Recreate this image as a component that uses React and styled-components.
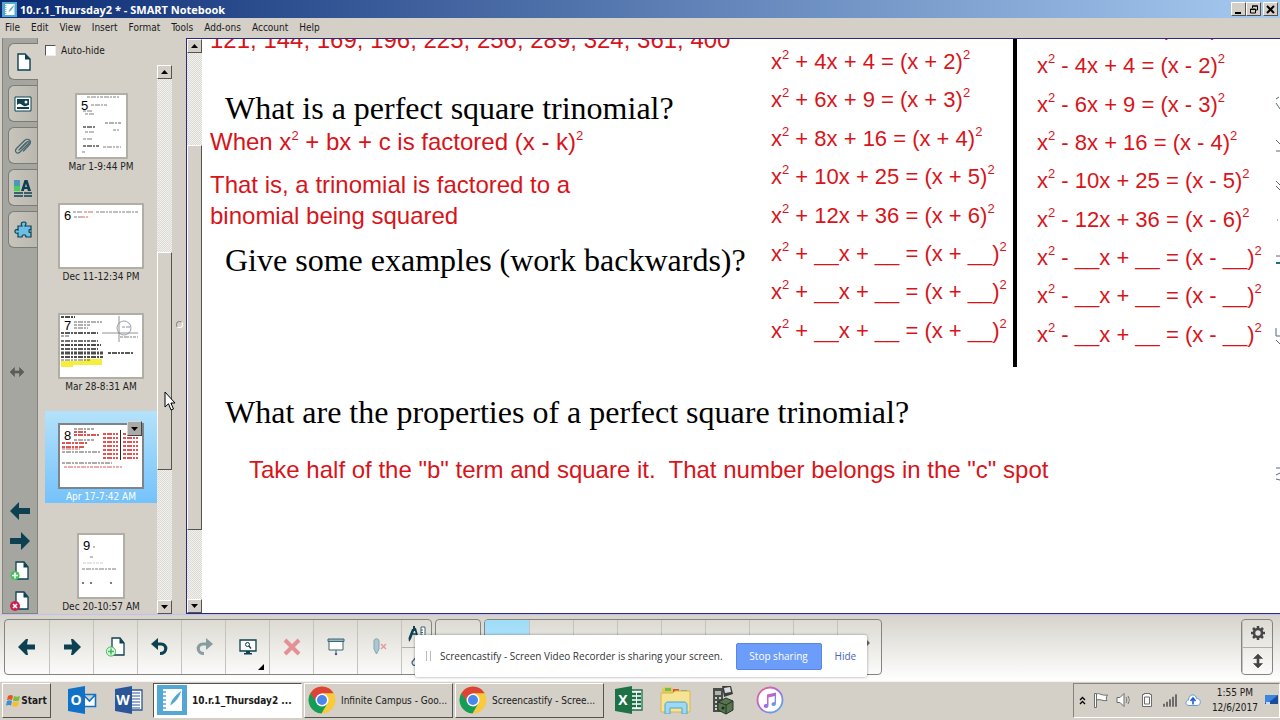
import React, { useState } from "react"
import styled, { createGlobalStyle, css } from "styled-components"

const UI_FONT = `"DejaVu Sans Condensed", "DejaVu Sans", sans-serif`

const GlobalStyle = createGlobalStyle`
  * {
    box-sizing: border-box;
  }
  body {
    margin: 0;
    overflow: hidden;
    font-family: ${UI_FONT};
    font-size: 10px;
    color: #1a1a1a;
  }
  button {
    padding: 0;
    border: 0;
    background: none;
    font: inherit;
    color: inherit;
  }
  svg {
    display: block;
    flex: none;
  }
`

const menus = ["File", "Edit", "View", "Insert", "Format", "Tools", "Add-ons", "Account", "Help"]

const plusRows = [
  "+ 4x + 4 = (x + 2)",
  "+ 6x + 9 = (x + 3)",
  "+ 8x + 16 = (x + 4)",
  "+ 10x + 25 = (x + 5)",
  "+ 12x + 36 = (x + 6)",
  "+ __x + __ = (x + __)",
  "+ __x + __ = (x + __)",
  "+ __x + __ = (x + __)",
]

const minusRows = [
  "- 2x + 1 = (x - 1)",
  "- 4x + 4 = (x - 2)",
  "- 6x + 9 = (x - 3)",
  "- 8x + 16 = (x - 4)",
  "- 10x + 25 = (x - 5)",
  "- 12x + 36 = (x - 6)",
  "- __x + __ = (x - __)",
  "- __x + __ = (x - __)",
  "- __x + __ = (x - __)",
]

/* ---------- icons ---------- */

const INK = "#0d4050"

const ArrowIcon = ({ flip, size = 20 }) => (
  <svg width={size} height={size} viewBox="0 0 20 20">
    <path
      d="M0 10 9 1v6h11v6H9v6z"
      fill={INK}
      transform={flip ? "rotate(180 10 10)" : undefined}
    />
  </svg>
)

const ToolArrowIcon = ({ flip }) => (
  <svg width="18" height="16" viewBox="0 0 18 16">
    <path
      d="M0 8 8 0h2L9 5.500h8v5H9l1 5.500H8z"
      fill={INK}
      transform={flip ? "rotate(180 9 8)" : undefined}
    />
  </svg>
)

const PageIcon = ({ badge, outline }) => (
  <svg width="20" height="20" viewBox="0 0 20 20">
    <path d="M6 1h8l4 5v12H6z" fill="#fff" stroke={INK} strokeWidth="1.3" />
    <path d="M13.500 1v5.500H18z" fill={INK} />
    {badge === "add" && (
      <>
        <circle cx="5" cy="14.500" r="4.600" fill={outline ? "#e4f5e2" : "#45c05c"} stroke={outline ? "#3fba5c" : "none"} />
        <path d="M5 11.500v6M2 14.500h6" stroke={outline ? "#3fba5c" : "#fff"} strokeWidth="1.500" />
      </>
    )}
    {badge === "delete" && (
      <>
        <circle cx="5" cy="15" r="5" fill="#c8234c" />
        <path d="m3 13 4 4m0-4-4 4" stroke="#fff" strokeWidth="1.600" />
      </>
    )}
  </svg>
)

const BlankPageIcon = () => (
  <svg width="14" height="18" viewBox="0 0 14 18">
    <path d="M1 1h7l5 5v11H1z" fill="#fff" stroke={INK} strokeWidth="1.400" />
    <path d="M8 1v5.500h5.500z" fill={INK} />
  </svg>
)

const GalleryIcon = () => (
  <svg width="18" height="16" viewBox="0 0 18 16">
    <path d="M1 1h16v14H1z" fill="#fff" stroke={INK} />
    <path d="M3 3h12v10H3z" fill={INK} />
    <path d="M3 9c3-3 5 0 7 1s3-1 5-1v2H3z" fill="#fff" />
    <circle cx="12" cy="6" r="1.500" fill="#fff" />
  </svg>
)

const ClipIcon = () => (
  <svg width="18" height="18" viewBox="0 0 18 18" fill="none" stroke="#44626b" strokeWidth="1.200" strokeLinecap="round">
    <path d="m5 13 8-8c1.500-1.500 3 0 1.500 1.500L6 15c-3 2.500-6-.5-3.500-3.500l8-8c3.500-3 8 .5 5 4l-6 6.500" />
    <path d="m7 11 5-5" />
  </svg>
)

const PropertiesIcon = () => (
  <svg width="18" height="18" viewBox="0 0 18 18">
    <path d="M0 1h6v6H0z" fill="#4c98b8" />
    <path d="M0 7h6v5H0z" fill="#44d058" />
    <path d="M7 12 10.500 1h3L17 12h-3l-.6-2h-3L9.800 12zM11 8h2l-1-3.600z" fill={INK} fillRule="evenodd" />
    <path d="M0 14h18M0 17h18" stroke={INK} strokeWidth="1.600" strokeDasharray="9 1 8" />
  </svg>
)

const PuzzleIcon = () => (
  <svg width="19" height="18" viewBox="0 0 19 18">
    <path
      d="M4 5h4c-2-3 0-4 2-4s3 1 1 4h6v4c-2-1-2 0-2 1s0 2 2 1v5h-5c0-3-4-3-4 0H4v-4c-3 1-3-1-3-2s1-2 3-1z"
      fill="#6bbfe4"
      stroke={INK}
      strokeWidth="1.200"
    />
  </svg>
)

const StretchIcon = ({ vertical, color = "#5c5c58" }) => (
  <svg width="14" height="14" viewBox="0 0 14 14">
    <path
      d="M0 7 4.500 2.500V6h5V2.500L14 7l-4.500 4.500V8h-5v3.500z"
      fill={color}
      stroke={color}
      strokeWidth=".6"
      transform={vertical ? "rotate(90 7 7)" : undefined}
    />
  </svg>
)

const UndoIcon = ({ redo }) => (
  <svg width="18" height="18" viewBox="0 0 18 18">
    <g transform={redo ? "matrix(-1 0 0 1 18 0)" : undefined} opacity={redo ? 0.45 : 1}>
      <path d="M5 6h5c6.500 0 6.500 9.500-1 9.500" fill="none" stroke={INK} strokeWidth="3.200" />
      <path d="M0 6 7 0v12z" fill={INK} />
    </g>
  </svg>
)

const MonitorIcon = () => (
  <svg width="18" height="18" viewBox="0 0 18 18">
    <path d="M1 2h16v11H1z" fill="#fff" stroke={INK} strokeWidth="1.300" />
    <path d="M7 13h4v2h2v1.500H5V15h2z" fill={INK} />
    <circle cx="8.500" cy="6.500" r="2" fill="none" stroke={INK} />
    <path d="m10 8 2 2.500" stroke={INK} strokeWidth="1.300" />
  </svg>
)

const CrossIcon = () => (
  <svg width="18" height="18" viewBox="0 0 18 18">
    <path d="m2 2 14 14m0-14L2 16" stroke="#e39096" strokeWidth="4" />
  </svg>
)

const ShadeIcon = () => (
  <svg width="18" height="18" viewBox="0 0 18 18">
    <path d="M2 3h14v9H2z" fill="#fff" stroke="#3d6673" />
    <path d="M1 1h16v2.500H1z" fill="#8fb9c6" stroke="#3d6673" />
    <path d="M9 12v3" stroke="#3d6673" />
    <circle cx="9" cy="16" r="1.200" fill="#3d6673" />
  </svg>
)

const PenOffIcon = () => (
  <svg width="16" height="18" viewBox="0 0 16 18">
    <path d="M2 3c0-3 5-3 5 0v8l-2.500 5L2 11z" fill="#a9c8d2" stroke="#86a4ae" />
    <path d="m9 6 5 5m0-5-5 5" stroke="#e49aa0" strokeWidth="1.500" />
  </svg>
)

const MeasureIcon = () => (
  <svg width="18" height="17" viewBox="0 0 18 17">
    <path d="M5 1h2v2h1l3 11-2-1-2-7-1 0-3 8-2 3-.5-4L4 4h1z" fill={INK} />
    <path d="M3 9h6" stroke={INK} strokeWidth="1.500" />
    <path d="M13 2h4v10h-4zM13 5h2M13 7.500h2M13 10h2" fill="#fff" stroke="#3d6673" />
  </svg>
)

const EraserIcon = () => (
  <svg width="12" height="14" viewBox="0 0 12 14">
    <path d="m6 2-5 6c0 3 2 4 4 3l6-6" fill="#e9f2f5" stroke="#3d6673" strokeWidth="1.300" />
  </svg>
)

const GearIcon = () => (
  <svg width="16" height="16" viewBox="0 0 16 16">
    <circle cx="8" cy="8" r="4" fill="none" stroke="#454545" strokeWidth="2.600" />
    <path
      d="M8 1v3M8 12v3M1 8h3M12 8h3M3 3l2 2M11 11l2 2M13 3l-2 2M5 11l-2 2"
      stroke="#454545"
      strokeWidth="2.500"
    />
  </svg>
)

const NotebookIcon = ({ size = 30 }) => (
  <svg width={size} height={size} viewBox="0 0 30 30">
    <path d="M0 0h30v30H0z" fill="#52a8d2" />
    <path d="M6 4h19v22H6z" fill="#fff" />
    <path d="M4 7h5M4 11h5M4 15h5M4 19h5M4 23h5" stroke="#52a8d2" strokeWidth="1.500" />
    <path d="M13 21c0-5 4-10 12-16-2 7-6 12-12 16z" fill="#52a8d2" stroke="#fff" strokeWidth=".7" />
  </svg>
)

const ChromeIcon = () => (
  <svg width="28" height="28" viewBox="0 0 28 28">
    <circle cx="14" cy="14" r="13.500" fill="#f8cb3c" />
    <path d="M2.300 7.200A13.500 13.500 0 0 1 25.700 7.200H14L8 17z" fill="#db4437" />
    <path d="M2.300 7.200A13.500 13.500 0 0 0 13.500 27.500L19 18h-9z" fill="#149d58" />
    <circle cx="14" cy="14" r="6.500" fill="#fff" />
    <circle cx="14" cy="14" r="5" fill="#4a86ec" />
  </svg>
)

/* the letter on an Office tile is plain svg text */
const OfficeIcon = ({ letter, color, kind }) => (
  <svg width="30" height="28" viewBox="0 0 30 28">
    {kind !== "mail" && <path d="M16 4h12v20H16z" fill="#fff" stroke={color} strokeWidth="1.300" />}
    {kind === "mail" && <path d="M16 8.500h12.500v12H16zm0 0 6.500 6.500 6-6.500" fill="#fff" stroke={color} strokeWidth="1.600" />}
    {kind === "lines" && <path d="M18 7h8M18 10h8M18 13h8M18 16h8M18 19h8M18 22h8" stroke={color} strokeWidth="1.200" />}
    {kind === "grid" && <path d="M18 8h4M23 8h4M18 12h4M23 12h4M18 16h4M23 16h4M18 20h4M23 20h4" stroke={color} strokeWidth="2.400" />}
    <path d="M1 3 18 0v28L1 25z" fill={color} />
    <text x="9" y="19" fontSize="14" fontWeight="bold" fontFamily="Open Sans, sans-serif" fill="#fff" textAnchor="middle">
      {letter}
    </text>
  </svg>
)

const FolderIcon = () => (
  <svg width="32" height="28" viewBox="0 0 32 28">
    <path d="M2 4c0-2 1-3 3-3h7l2 3h14v4H2z" fill="#e8c85a" />
    <path d="M5 2h6v3H5z" fill="#6fbf4e" />
    <path d="M13 3h6v3h-6z" fill="#d2553c" />
    <path d="M21 4h6v3h-6z" fill="#4f9bd2" />
    <path d="M1 7h12l2-2h15v21H1z" fill="#f7e394" stroke="#d8b84c" />
    <path d="M5 28v-9c0-2 1-3 3-3h16c2 0 3 1 3 3v9h-5v-6H10v6z" fill="#9fd8f2" stroke="#4fa4d0" />
  </svg>
)

const CalculatorIcon = () => (
  <svg width="24" height="30" viewBox="0 0 24 30">
    <path d="M2 3h10v24H2z" fill="#4c4c4c" />
    <path d="M11 1h9l2 8-9 3z" fill="#3a3f3a" />
    <path d="m13 3 6-1 1 5-6 1z" fill="#d9dde0" />
    <path d="M4 6h6v4H4z" fill="#a8b8a8" />
    <path d="M4 13h2M8 13h2M4 17h2M4 21h2M4 24h2" stroke="#ccc" strokeWidth="2" />
    <path d="m7 17 8-4 7 3v9l-7 4-8-4z" fill="#55744f" stroke="#243523" />
    <path d="m7 17 8 3 7-4M15 20v9" fill="none" stroke="#243523" />
    <circle cx="12" cy="23" r="1.500" fill="#1c2a1c" />
  </svg>
)

const MusicIcon = () => (
  <svg width="28" height="28" viewBox="0 0 28 28">
    <defs>
      <linearGradient id="ring" x1="0" y1="0" x2="1" y2="1">
        <stop offset="0" stopColor="#f2608a" />
        <stop offset=".5" stopColor="#a86be0" />
        <stop offset="1" stopColor="#44b8ee" />
      </linearGradient>
    </defs>
    <circle cx="14" cy="14" r="12.500" fill="#fff" stroke="url(#ring)" strokeWidth="1.800" />
    <path
      d="M11 8.500 20 6.500v11c0 3.500-4.500 3.200-4.500.8 0-1.800 1.500-2 3.200-2.300v-6l-6.200 1.400v8c0 3.500-4.800 3.200-4.800.7 0-1.800 1.600-2 3.300-2.300z"
      fill="url(#ring)"
    />
  </svg>
)

const WindowsIcon = () => (
  <svg width="15" height="15" viewBox="0 0 15 15">
    <path d="M2 3c2-1.500 3.500-1 5-.3L6 7C4.500 6.300 3 6.200 1 7z" fill="#e0562c" />
    <path d="M8 3c2 1 4 1 6 0l-1 4.500c-2 1-4 1-6 0z" fill="#7fba3c" />
    <path d="M1 8c2-1 3.500-.7 5 0l-1 4.500c-1.500-.8-3-.8-5 0z" fill="#3c8fd6" />
    <path d="M7 8.500c2 1 4 1 6 0L12 13c-2 1-4 1-6 0z" fill="#f6c02c" />
  </svg>
)

const TrayIcon = ({ kind }) => (
  <svg width="16" height="16" viewBox="0 0 16 16" fill="#fbfbfb" stroke="#6c6c6c">
    {kind === "flag" && <path d="M1.500 1.500h2v14h-2zM3.500 2c3-1.500 5 2 11 1-1.500 2-1.500 4-.5 5.500-4 1-7-2-10.500-.5z" />}
    {kind === "sound" && <path d="M1 5.500h3l4-4v13l-4-4H1zM10 5c1 2 1 4 0 6M12 4c1.500 3 1.500 5 0 8" />}
    {kind === "battery" && <path d="M5 1.500h6v1h1.500v12h-9v-12H5zM5.500 5h5v7h-5z" />}
    {kind === "signal" && <path d="M1.500 12v2.500h1V12zM4.500 10v4.500h1V10zM7.500 7.500v7h1v-7zM10.500 5v9.500h1V5zM13.500 2.500v12h1v-12z" />}
    {kind === "cloud" && (
      <>
        <path d="M4 13.500c-4 0-4-5-.5-5.500 0-6 7-7 8-1.500 5 0 5 7 .5 7z" fill="#fff" stroke="#6a98dc" />
        <path d="M8 12.500V7M5.500 9 8 6l2.500 3" fill="none" stroke="#1b5fd0" strokeWidth="1.600" />
      </>
    )}
  </svg>
)

const Triangle = ({ down }) => (
  <svg width="8" height="4" viewBox="0 0 8 4">
    <path d={down ? "M0 0h7L3.500 4z" : "M0 4h7L3.500 0z"} />
  </svg>
)

/* ---------- page previews ---------- */

const Scribble = ({ y, x = 2, w, color = "#555", thick = 2 }) => (
  <path d={`M${x} ${y}h${w}`} stroke={color} strokeWidth={thick} strokeDasharray="3 1 5 1 2 1" opacity=".75" />
)

const previews = {
  5: (
    <>
      <Scribble y={2} x={10} w={32} thick={1} />
      <Scribble y={10} x={14} w={16} thick={1} />
      <Scribble y={16} x={6} w={9} thick={1} />
      <Scribble y={19} x={8} w={10} thick={1} />
      <Scribble y={28} x={28} w={16} color="#333" thick={1} />
      <Scribble y={32} x={6} w={12} thick={2} />
      <Scribble y={37} x={8} w={9} thick={1} />
      <Scribble y={35} x={36} w={6} thick={1} />
      <Scribble y={44} x={6} w={9} thick={1} />
      <Scribble y={51} x={6} w={16} thick={2} />
      <Scribble y={52} x={26} w={18} thick={1} />
      <Scribble y={57} x={5} w={3} thick={1} />
    </>
  ),
  6: (
    <>
      <Scribble y={7} x={13} w={10} thick={1} />
      <Scribble y={7} x={24} w={10} color="#d03030" thick={1} />
      <Scribble y={7} x={36} w={42} thick={1} />
      <Scribble y={12} x={14} w={8} thick={1} />
      <Scribble y={12} x={22} w={6} color="#d03030" thick={1} />
    </>
  ),
  7: (
    <>
      <Scribble y={2} x={1} w={14} color="#111" />
      <Scribble y={7} x={14} w={28} color="#333" thick={1} />
      <Scribble y={10} x={14} w={16} color="#333" thick={1} />
      <Scribble y={13} x={14} w={14} color="#333" thick={1} />
      <Scribble y={18} x={1} w={37} color="#222" />
      <Scribble y={21} x={1} w={8} color="#222" thick={1} />
      <Scribble y={26} x={1} w={37} color="#444" />
      <Scribble y={30} x={1} w={40} color="#111" />
      <Scribble y={34} x={1} w={37} color="#222" />
      <Scribble y={38} x={1} w={42} color="#111" thick={3} />
      <Scribble y={42} x={1} w={42} color="#111" />
      <path d="M24 44h18v6H1v-4h23zM1 49h12v3H1z" fill="#f5ee3c" />
      <Scribble y={45} x={1} w={30} color="#333" thick={1} />
      <path d="M42 18h36M59 1v26" stroke="#777" strokeWidth=".8" />
      <circle cx="64" cy="13" r="7" fill="none" stroke="#7f8a9c" strokeWidth=".8" />
      <Scribble y={12} x={62} w={8} color="#5868a8" thick={1} />
      <Scribble y={22} x={60} w={18} color="#555" thick={1} />
      <Scribble y={38} x={48} w={26} color="#222" />
    </>
  ),
  8: (
    <>
      <Scribble y={4} x={14} w={20} color="#222" thick={1} />
      <Scribble y={7} x={14} w={12} color="#d02020" />
      <Scribble y={10} x={14} w={26} color="#d02020" />
      <Scribble y={15} x={14} w={20} color="#222" thick={1} />
      <Scribble y={18} x={2} w={26} color="#d02020" />
      <Scribble y={22} x={2} w={22} color="#d02020" />
      <Scribble y={24} x={2} w={18} color="#d02020" thick={1} />
      <Scribble y={27} x={2} w={38} color="#222" thick={1} />
      {[9, 13, 17, 21, 25, 29, 33].map((y) => (
        <React.Fragment key={y}>
          <Scribble y={y} x={43} w={15} color="#e01818" />
          <Scribble y={y} x={63} w={15} color="#e01818" />
        </React.Fragment>
      ))}
      <path d="M60.500 5v30" stroke="#222" />
      <Scribble y={38} x={2} w={50} color="#222" thick={1} />
      <Scribble y={42} x={4} w={58} color="#d02020" thick={1} />
    </>
  ),
  9: (
    <>
      <Scribble y={12} x={14} w={2} thick={1} />
      <Scribble y={22} x={11} w={3} thick={1} />
      <Scribble y={28} x={4} w={20} color="#bbb" thick={1} />
      <Scribble y={34} x={3} w={34} thick={1} />
      <Scribble y={48} x={3} w={2} />
      <Scribble y={48} x={11} w={2} />
      <Scribble y={48} x={31} w={2} />
    </>
  ),
}

const pages = [
  { number: 5, label: "Mar 1-9:44 PM", width: 49 },
  { number: 6, label: "Dec 11-12:34 PM", width: 82 },
  { number: 7, label: "Mar 28-8:31 AM", width: 82 },
  { number: 8, label: "Apr 17-7:42 AM", width: 82 },
  { number: 9, label: "Dec 20-10:57 AM", width: 44 },
]

const ScrollBar = ({ before, thumb, after, name }) => (
  <ScrollStyled>
    <ScrollButton aria-label={`${name} up`}>
      <Triangle />
    </ScrollButton>
    <ScrollSpace $grow={before} />
    <ScrollThumb $grow={thumb} />
    <ScrollSpace $grow={after} />
    <ScrollButton aria-label={`${name} down`}>
      <Triangle down />
    </ScrollButton>
  </ScrollStyled>
)

const Equation = ({ children }) => (
  <EquationStyled>
    x<Sup>2</Sup> {children}
    <Sup>2</Sup>
  </EquationStyled>
)

export default function App() {
  const [selected, setSelected] = useState(8)
  const [autoHide, setAutoHide] = useState(false)
  const [sharing, setSharing] = useState(true)

  return (
    <>
      <GlobalStyle />
      <Desktop>
        <TitleBar>
          <NotebookIcon size={15} />
          <Title>10.r.1_Thursday2 * - SMART Notebook</Title>
          <WindowButton aria-label="Minimize">
            <svg width="10" height="9" viewBox="0 0 10 9">
              <path d="M1 7h6v2H1z" />
            </svg>
          </WindowButton>
          <WindowButton aria-label="Restore">
            <svg width="10" height="9" viewBox="0 0 10 9" fill="none" stroke="#000">
              <path d="M3.500 3V1h5v4H7M3 1h6M1.500 4h5v4h-5zM1 4.500h6" />
            </svg>
          </WindowButton>
          <WindowButton aria-label="Close" $apart>
            <svg width="10" height="9" viewBox="0 0 10 9">
              <path d="m1 1 7 7m0-7L1 8" stroke="#000" strokeWidth="2" />
            </svg>
          </WindowButton>
        </TitleBar>

        <MenuBar>
          {menus.map((menu) => (
            <button key={menu}>{menu}</button>
          ))}
        </MenuBar>

        <Workspace>
          <TabStrip>
            <Tab $active aria-label="Page sorter">
              <BlankPageIcon />
            </Tab>
            <Tab aria-label="Gallery">
              <GalleryIcon />
            </Tab>
            <Tab aria-label="Attachments">
              <ClipIcon />
            </Tab>
            <Tab aria-label="Properties">
              <PropertiesIcon />
            </Tab>
            <Tab aria-label="Add-ons">
              <PuzzleIcon />
            </Tab>
            <StripSpace>
              <StretchIcon />
            </StripSpace>
            <StripButton aria-label="Previous page">
              <ArrowIcon />
            </StripButton>
            <StripButton aria-label="Next page">
              <ArrowIcon flip />
            </StripButton>
            <StripButton aria-label="Add page">
              <PageIcon badge="add" />
            </StripButton>
            <StripButton aria-label="Delete page">
              <PageIcon badge="delete" />
            </StripButton>
          </TabStrip>

          <Sorter>
            <AutoHide>
              <input type="checkbox" checked={autoHide} onChange={() => setAutoHide(!autoHide)} />
              Auto-hide
            </AutoHide>
            <SorterBody>
              <PageList>
                {pages.map(({ number, label, width }) => (
                  <PageItem key={number} $selected={number === selected} onClick={() => setSelected(number)}>
                    <Thumb $selected={number === selected}>
                      <svg width={width} height="62" viewBox={`0 0 ${width} 62`}>
                        {previews[number]}
                        <text x="4" y="15" fontSize="13" fontFamily="Liberation Sans, sans-serif">
                          {number}
                        </text>
                      </svg>
                    </Thumb>
                    {label}
                    {number === selected && (
                      <PageMenu>
                        <Triangle down />
                      </PageMenu>
                    )}
                  </PageItem>
                ))}
              </PageList>
              <ScrollBar name="Pages" before={174} thumb={216} after={131} />
            </SorterBody>
          </Sorter>

          <Splitter>
            <i />
          </Splitter>

          <Canvas>
            <ScrollBar name="Canvas" before={92} thumb={385} after={69} />
            <Page>
              <Columns>
                <Notes>
                  <Answer>121, 144, 169, 196, 225, 256, 289, 324, 361, 400</Answer>
                  <Question $top={35}>What is a perfect square trinomial?</Question>
                  <Answer>
                    When x<Sup>2</Sup> + bx + c is factored (x - k)<Sup>2</Sup>
                  </Answer>
                  <Answer $top={12}>
                    That is, a trinomial is factored to a
                    <br />
                    binomial being squared
                  </Answer>
                  <Question $top={11}>Give some examples (work backwards)?</Question>
                </Notes>
                <PlusColumn>
                  {plusRows.map((row, i) => (
                    <Equation key={i}>{row}</Equation>
                  ))}
                </PlusColumn>
                <MinusColumn>
                  {minusRows.map((row, i) => (
                    <Equation key={i}>{row}</Equation>
                  ))}
                </MinusColumn>
              </Columns>
              <Question $top={27} $inset>
                What are the properties of a perfect square trinomial?
              </Question>
              <Answer $top={24} $inset>
                Take half of the "b" term and square it.&nbsp; That number belongs in the "c" spot
              </Answer>
            </Page>
            <EdgeMarks aria-hidden="true">
              <svg width="5" height="575" viewBox="0 0 5 575" fill="none" stroke="#5a6678">
                <path d="M1 60 4 58M1 64l4 6M1 101l4 4M1 112h4M1 142l4 4M1 147l4 4M2 181h1M1 217h4" />
                <path d="M1 224h4" stroke="#1d6f86" strokeWidth="2" />
                <path d="M1 289v8h4M1 301l4 4M1 429h4M1 436l4-2M1 440l4 1" />
              </svg>
            </EdgeMarks>
          </Canvas>
        </Workspace>

        <Toolbar>
          <ToolGroup>
            <Tool aria-label="Previous page">
              <ToolArrowIcon />
            </Tool>
            <Tool aria-label="Next page">
              <ToolArrowIcon flip />
            </Tool>
            <Tool aria-label="Add page">
              <PageIcon badge="add" outline />
            </Tool>
            <Tool aria-label="Undo">
              <UndoIcon />
            </Tool>
            <Tool aria-label="Redo">
              <UndoIcon redo />
            </Tool>
            <Tool aria-label="View screens" $menu>
              <MonitorIcon />
            </Tool>
            <Tool aria-label="Delete">
              <CrossIcon />
            </Tool>
            <Tool aria-label="Screen shade">
              <ShadeIcon />
            </Tool>
            <Tool aria-label="Clear ink">
              <PenOffIcon />
            </Tool>
            <ToolStack>
              <button aria-label="Measurement tools">
                <MeasureIcon />
              </button>
              <button aria-label="Eraser">
                <EraserIcon />
              </button>
            </ToolStack>
          </ToolGroup>
          <ToolGroup>
            <Tool aria-label="Add-on tools" />
          </ToolGroup>
          <ToolGroup>
            <Tool aria-label="Select" $lit />
            {[1, 2, 3, 4, 5, 6, 7].map((n) => (
              <Tool key={n} aria-label={`Pen ${n}`} />
            ))}
            <Tool aria-label="More pens">
              <MoreArrow width="4" height="8" viewBox="0 0 4 8">
                <path d="M0 0v8l4-4z" fill="#666" />
              </MoreArrow>
            </Tool>
          </ToolGroup>
          <ToolGroup $end>
            <ToolStack>
              <button aria-label="Settings">
                <GearIcon />
              </button>
              <button aria-label="Move toolbar">
                <StretchIcon vertical color="#454545" />
              </button>
            </ToolStack>
          </ToolGroup>

          {sharing && (
            <ShareBar>
              <Grip />
              <span>Screencastify - Screen Video Recorder is sharing your screen.</span>
              <StopButton>Stop sharing</StopButton>
              <HideButton onClick={() => setSharing(false)}>Hide</HideButton>
            </ShareBar>
          )}
        </Toolbar>

        <TaskBar>
          <StartButton>
            <WindowsIcon />
            Start
          </StartButton>
          <QuickLaunch aria-label="Outlook">
            <OfficeIcon letter="O" color="#0f72c6" kind="mail" />
          </QuickLaunch>
          <QuickLaunch aria-label="Word">
            <OfficeIcon letter="W" color="#2a5699" kind="lines" />
          </QuickLaunch>
          <Task $active>
            <NotebookIcon />
            <span>10.r.1_Thursday2 ...</span>
          </Task>
          <Task>
            <ChromeIcon />
            <span>Infinite Campus - Goo...</span>
          </Task>
          <Task>
            <ChromeIcon />
            <span>Screencastify - Scree...</span>
          </Task>
          <QuickLaunch aria-label="Excel">
            <OfficeIcon letter="X" color="#1e7145" kind="grid" />
          </QuickLaunch>
          <QuickLaunch aria-label="Explorer">
            <FolderIcon />
          </QuickLaunch>
          <QuickLaunch aria-label="Calculator">
            <CalculatorIcon />
          </QuickLaunch>
          <QuickLaunch aria-label="iTunes">
            <MusicIcon />
          </QuickLaunch>
          <Tray>
            <svg width="7" height="9" viewBox="0 0 7 9" fill="none" stroke="#000" strokeWidth="1.300">
              <path d="m1 4 2.500-2.500L6 4M1 8l2.500-2.500L6 8" />
            </svg>
            <TrayIcon kind="flag" />
            <TrayIcon kind="sound" />
            <TrayIcon kind="battery" />
            <TrayIcon kind="signal" />
            <TrayIcon kind="cloud" />
            <Clock>
              1:55 PM
              <br />
              12/6/2017
            </Clock>
            <svg width="13" height="12" viewBox="0 0 13 12">
              <path d="M0 1h13v9H0z" fill="#1b4c9c" />
              <path d="M0 1h13L3 9H0z" fill="#3b86de" />
              <path d="M1 8h4v3H1z" fill="#c9dcef" />
            </svg>
          </Tray>
        </TaskBar>

        <Cursor width="12" height="20" viewBox="0 0 12 20">
          <path d="M1 1v15l3.500-3.300L7 19l2.500-1-2.600-6H11z" fill="#fff" stroke="#000" />
        </Cursor>
      </Desktop>
    </>
  )
}

/* ---------- styles ---------- */

const FACE = "#d4d0c8"

const raised = css`
  border: 1px solid;
  border-color: #fff #55534e #55534e #fff;
  background: ${FACE};
`

const Desktop = styled.div`
  position: relative;
  height: 100vh;
  display: flex;
  flex-direction: column;
  overflow: hidden;
  background: ${FACE};
`

const TitleBar = styled.header`
  flex: none;
  height: 18px;
  display: flex;
  align-items: center;
  padding: 0 2px;
  background: linear-gradient(90deg, #0c2c74, #a6caf0);
`

const Title = styled.h1`
  flex: 1;
  margin: 0 0 0 3px;
  font: bold 11px "Open Sans", sans-serif;
  color: #fff;
`

const WindowButton = styled.button`
  ${raised}
  width: 15px;
  height: 14px;
  margin-left: ${({ $apart }) => ($apart ? "2px" : 0)};
  display: flex;
  align-items: center;
  justify-content: center;
`

const MenuBar = styled.nav`
  flex: none;
  height: 20px;
  display: flex;
  align-items: center;
  gap: 11px;
  padding: 0 5px 2px;
`

const Workspace = styled.main`
  flex: 1;
  min-height: 0;
  display: flex;
`

const TabStrip = styled.div`
  width: 36px;
  margin-left: 2px;
  padding: 5px 0 0 5px;
  display: flex;
  flex-direction: column;
  gap: 5px;
  background: #a6a6a0;
  border: 1px solid #83837d;
  border-width: 0 1px 1px 1px;
`

const Tab = styled.button`
  flex: none;
  height: 37px;
  display: flex;
  align-items: center;
  justify-content: center;
  border: 1px solid #7c7c76;
  border-right: 0;
  border-radius: 6px 0 0 6px;
  background: ${({ $active }) => ($active ? FACE : "linear-gradient(90deg, #c6c4bb, #bab8af)")};
  margin-right: ${({ $active }) => ($active ? "-1px" : 0)};
`

const StripSpace = styled.div`
  flex: 1;
  padding: 112px 0 0 2px;
`

const StripButton = styled.button`
  height: 25px;
  padding: 0 0 0 2px;
`

const Sorter = styled.aside`
  width: 134px;
  display: flex;
  flex-direction: column;
`

const AutoHide = styled.label`
  flex: none;
  height: 27px;
  display: flex;
  align-items: center;
  gap: 5px;
  padding: 0 0 2px 7px;
  input {
    appearance: none;
    width: 11px;
    height: 11px;
    margin: 0;
    background: #fff;
    border: 1px solid;
    border-color: #55534e #eee #eee #55534e;
  }
  input:checked {
    background: #0a246a;
  }
`

const SorterBody = styled.div`
  flex: 1;
  min-height: 0;
  display: flex;
`

const PageList = styled.div`
  flex: 1;
  padding: 16px 0 0 7px;
  display: flex;
  flex-direction: column;
  gap: 18px;
`

const PageItem = styled.button`
  position: relative;
  flex: none;
  height: 92px;
  padding-top: 12px;
  display: flex;
  flex-direction: column;
  align-items: center;
  line-height: 16px;
  white-space: nowrap;
  color: ${({ $selected }) => ($selected ? "#fff" : "#222")};
  background: ${({ $selected }) => ($selected ? "linear-gradient(#b4e2fa, #74c2fc)" : "none")};
`

const Thumb = styled.span`
  background: #fff;
  border: 2px solid ${({ $selected }) => ($selected ? "#7d858a" : "#b0aea5")};
`

const PageMenu = styled.span`
  position: absolute;
  top: 10px;
  right: 15px;
  width: 15px;
  height: 15px;
  display: flex;
  align-items: center;
  justify-content: center;
  background: #a9a9a6;
  border: 1px solid;
  border-color: #d8d8d8 #444 #444 #d8d8d8;
`

const ScrollStyled = styled.div`
  flex: none;
  width: 15px;
  display: flex;
  flex-direction: column;
`

const ScrollButton = styled.button`
  ${raised}
  flex: none;
  height: 14px;
  display: flex;
  align-items: center;
  justify-content: center;
`

const ScrollSpace = styled.div`
  flex: ${({ $grow }) => $grow} 0 0;
  background: repeating-conic-gradient(#dcdad4 0 25%, #f2f1ee 0 50%) 0 0 / 2px 2px;
`

const ScrollThumb = styled.div`
  ${raised}
  flex: ${({ $grow }) => $grow} 0 0;
`

const Splitter = styled.div`
  width: 14px;
  padding-top: 283px;
  i {
    display: block;
    width: 7px;
    height: 7px;
    margin: 0 auto;
    border: 1px solid;
    border-color: #8c8a84 #fff #fff #8c8a84;
    border-radius: 50%;
  }
`

const Canvas = styled.section`
  position: relative;
  flex: 1;
  min-width: 0;
  display: flex;
  overflow: hidden;
  background: #fff;
  border: 1px solid #2a2a86;
  border-width: 1px 0 1px 1px;
`

/* scrolled a little, the first lines run under the menu bar */
const Page = styled.article`
  flex: 1;
  min-width: 0;
  margin-top: -30px;
  white-space: nowrap;
`

const Columns = styled.div`
  display: flex;
  height: 358px;
`

const Notes = styled.div`
  width: 569px;
  padding: 15px 0 0 8px;
`

const Question = styled.h2`
  margin: ${({ $top = 0 }) => $top}px 0 0;
  padding-left: ${({ $inset }) => ($inset ? "23px" : "15px")};
  font: 32px/36px "Liberation Serif", serif;
  color: #000;
`

const Answer = styled.p`
  margin: ${({ $top = 0 }) => $top}px 0 0;
  padding-left: ${({ $inset }) => ($inset ? "47px" : 0)};
  font: 24px/31px "Liberation Sans", sans-serif;
  color: #d8141a;
`

/* rows share the column height evenly */
const EquationColumn = styled.div`
  display: grid;
  grid-auto-rows: 1fr;
`

const PlusColumn = styled(EquationColumn)`
  width: 242px;
  padding: 34px 0 17px;
`

const MinusColumn = styled(EquationColumn)`
  flex: 1;
  padding: 0 0 13px 20px;
  border-left: 4px solid #000;
`

const EquationStyled = styled.p`
  margin: 0;
  font: 22px/38px "Liberation Sans", sans-serif;
  color: #d8141a;
`

const Sup = styled.sup`
  font-size: 13px;
  line-height: 0;
  vertical-align: 10px;
`

const EdgeMarks = styled.div`
  position: absolute;
  top: 0;
  right: 0;
`

const Toolbar = styled.div`
  position: relative;
  flex: none;
  height: 67px;
  padding: 4px 7px 6px 4px;
  display: flex;
  gap: 3px;
  background: linear-gradient(#d6d3cb, #ffffff);
  border-top: 1px solid #c4c0ee;
`

const ToolGroup = styled.div`
  display: flex;
  overflow: hidden;
  border: 1px solid #85857f;
  border-radius: 4px;
  background: linear-gradient(#dcdad2, #fbfbfa);
  margin-left: ${({ $end }) => ($end ? "auto" : 0)};
`

const Tool = styled.button`
  position: relative;
  width: 44px;
  display: flex;
  align-items: center;
  justify-content: center;
  background: ${({ $lit }) => ($lit ? "linear-gradient(#9fdcf8, #c4ecfc)" : "none")};
  & + & {
    border-left: 1px solid #c4c3bd;
  }
  ${({ $menu }) =>
    $menu &&
    css`
      &::after {
        content: "";
        position: absolute;
        right: 5px;
        bottom: 4px;
        border: 3px solid;
        border-color: transparent #000 #000 transparent;
      }
    `}
`

const MoreArrow = styled.svg`
  margin: 0 11px 8px auto;
`

const ToolStack = styled.div`
  width: 30px;
  display: flex;
  flex-direction: column;
  border-left: 1px solid #c4c3bd;
  button {
    flex: 1;
    display: flex;
    align-items: center;
    justify-content: center;
  }
  button + button {
    border-top: 1px solid #b0afa9;
  }
`

const ShareBar = styled.div`
  position: absolute;
  top: 20px;
  left: 415px;
  height: 42px;
  display: flex;
  align-items: center;
  padding: 0 11px;
  background: #fff;
  border-radius: 2px;
  box-shadow: 0 0 3px rgba(0, 0, 0, 0.4);
  font: 10px "Open Sans", sans-serif;
  color: #333;
  white-space: nowrap;
`

const Grip = styled.i`
  width: 5px;
  height: 10px;
  margin-right: 9px;
  border: 1px solid #bbb;
  border-width: 0 1px;
`

const StopButton = styled.button`
  width: 86px;
  height: 27px;
  margin: 0 13px;
  color: #fff;
  background: #6c9dfb;
  border: 1px solid #5a86dd;
  border-radius: 2px;
`

const HideButton = styled.button`
  color: #4668b4;
`

const TaskBar = styled.footer`
  flex: none;
  height: 39px;
  padding: 1px 0 3px 2px;
  display: flex;
  align-items: center;
  gap: 2px;
  border-top: 1px solid #f4f3f0;
  background: ${FACE};
`

const StartButton = styled.button`
  ${raised}
  height: 35px;
  width: 49px;
  display: flex;
  align-items: center;
  justify-content: center;
  font-weight: bold;
  margin-right: 6px;
`

const QuickLaunch = styled.button`
  width: 45px;
  display: flex;
  justify-content: center;
`

const Task = styled.button`
  ${raised}
  width: 149px;
  height: 35px;
  display: flex;
  align-items: center;
  gap: 5px;
  padding: 0 3px;
  white-space: nowrap;
  ${({ $active }) =>
    $active &&
    css`
      font-weight: bold;
      background: #fff;
      border-color: #55534e #fff #fff #55534e;
    `}
`

const Tray = styled.div`
  margin-left: auto;
  height: 35px;
  display: flex;
  align-items: center;
  gap: 7px;
  padding: 0 1px 0 5px;
  border: 1px solid;
  border-color: #85837c #fff #fff #85837c;
`

const Clock = styled.time`
  margin-left: 4px;
  line-height: 15px;
  text-align: center;
`

const Cursor = styled.svg`
  position: absolute;
  left: 164px;
  top: 391px;
`
